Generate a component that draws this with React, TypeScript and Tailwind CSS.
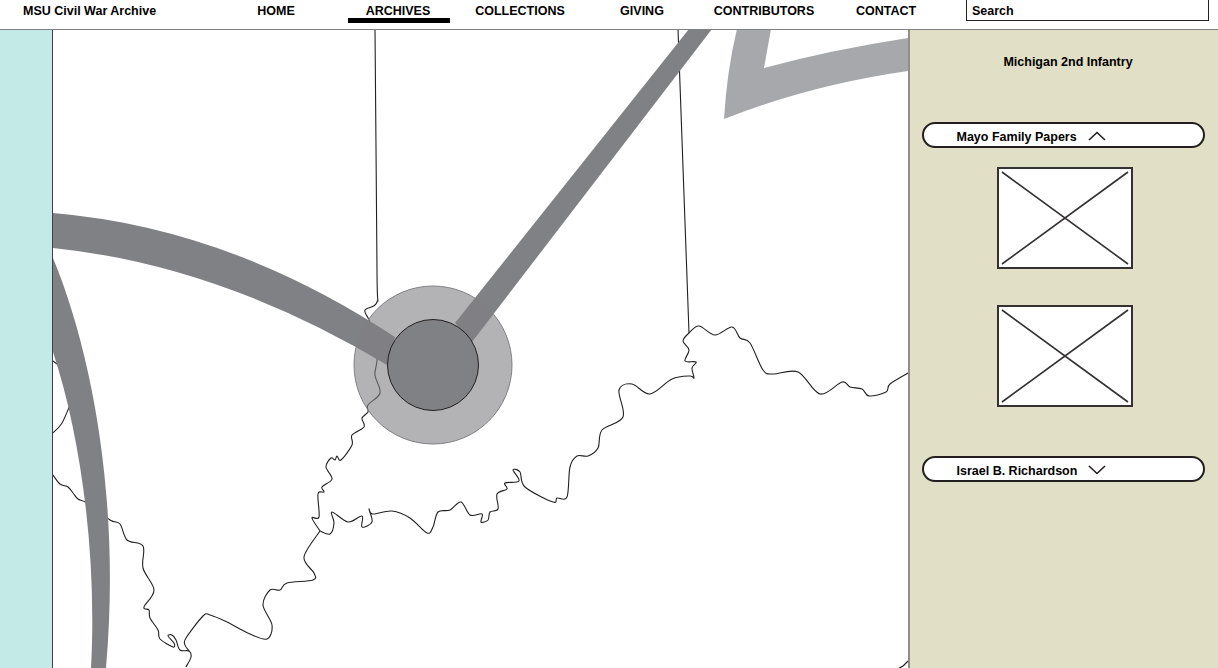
import { FC } from 'react'

const font = "font-['Liberation_Sans',Arial,sans-serif]"

type Pt = [number, number]

// smooth line through traced points (catmull-rom)
const smooth = (pts: Pt[]) => {
  let d = `M${pts[0][0]} ${pts[0][1]}`
  for (let i = 0; i < pts.length - 1; i++) {
    const p0 = pts[i - 1] || pts[i]
    const p1 = pts[i]
    const p2 = pts[i + 1]
    const p3 = pts[i + 2] || p2
    const c1x = p1[0] + (p2[0] - p0[0]) / 6
    const c1y = p1[1] + (p2[1] - p0[1]) / 6
    const c2x = p2[0] - (p3[0] - p1[0]) / 6
    const c2y = p2[1] - (p3[1] - p1[1]) / 6
    d += `C${c1x.toFixed(1)} ${c1y.toFixed(1)} ${c2x.toFixed(1)} ${c2y.toFixed(1)} ${p2[0]} ${p2[1]}`
  }
  return d
}

const rivers: Pt[][] = [
  // west border down to the bottom edge
  [[53, 475], [60, 484], [68, 487], [73, 493], [78, 499], [87, 503], [110, 520], [120, 524], [127, 540], [143, 546], [143, 568], [154, 590], [144, 607], [149, 610], [150, 618], [158, 630], [160, 639], [173, 647], [174, 643], [168, 636], [172, 635], [176, 640], [180, 650], [189, 651], [191, 657], [186, 667]],
  [[53, 433], [62, 423], [70, 405]],
  [[53, 361], [57, 364]],
  // main river, bottom edge to the junction
  [[189, 651], [185, 645], [186, 638], [203, 616], [210, 615], [227, 622], [250, 634], [267, 639], [272, 625], [263, 605], [270, 590], [280, 590], [287, 583], [313, 580], [314, 573], [304, 557], [320, 531]],
  // junction up to the north border
  [[320, 531], [312, 518], [319, 517], [318, 494], [324, 492], [322, 487], [332, 479], [326, 467], [331, 458], [335, 460], [337, 456], [341, 460], [352, 445], [352, 435], [364, 427], [362, 418], [368, 412], [368, 405], [380, 393], [375, 375], [377, 360], [375, 340], [369, 320], [365, 310], [377, 302], [377, 270], [375, 29]],
  // junction east along the bottom
  [[320, 531], [330, 534], [334, 523], [332, 512], [348, 522], [362, 516], [362, 527], [372, 522], [369, 509], [373, 514], [392, 511], [410, 518], [427, 533], [433, 527], [438, 512], [450, 510], [461, 502], [470, 515], [482, 514], [481, 522], [488, 520], [490, 512], [498, 509], [497, 494], [507, 489], [505, 483], [519, 481], [513, 470], [520, 472], [525, 487], [553, 502], [557, 498], [567, 497], [570, 467], [577, 456], [588, 456], [598, 448], [602, 430], [623, 417], [619, 390], [632, 384], [650, 394], [672, 379], [690, 376], [694, 378], [692, 368], [696, 362], [685, 361], [689, 350], [683, 341], [689, 333], [699, 326], [715, 335], [732, 327], [740, 338], [750, 343], [763, 370], [773, 374], [798, 372], [820, 394], [842, 382], [850, 387], [862, 389], [869, 396], [886, 392], [890, 384], [908, 373]],
  [[689, 333], [678, 29]],
  [[899, 668], [903, 666], [908, 661]],
]

const MapArt: FC = () => (
  <svg viewBox="53 30 855 638" className="block h-full w-full">
    {rivers.map((r, i) => (
      <path key={i} d={smooth(r)} fill="none" stroke="#231f20" strokeWidth="1.1" />
    ))}
    <path d="M737 29Q727 70 724 119Q810 85 908 71L908 38Q830 50 764 68L771 29Z" fill="#a7a8ab" />
    <path d="M53 213Q230 228 395 337L387 365Q220 265 53 248Z" fill="#808184" />
    <path d="M689 29L712 29L472 342L455 323Z" fill="#808184" />
    <path d="M53 258C95 360 120 510 106 668L91 668C97 560 82 440 53 352Z" fill="#808184" />
    <circle cx="433" cy="365" r="79" fill="#808184" fillOpacity="0.6" stroke="#808184" strokeWidth="1" />
    <circle cx="433" cy="365" r="45.5" fill="#808184" stroke="#231f20" strokeWidth="1" />
  </svg>
)

const NavItem: FC<{ label: string; active?: boolean }> = ({ label, active }) => (
  <div className="relative flex w-[122px] justify-center">
    <span>{label}</span>
    {active && <span className="absolute top-[14px] left-[11px] h-[5px] w-[102px] bg-black" />}
  </div>
)

const Pill: FC<{ label: string; open?: boolean }> = ({ label, open }) => (
  <div className="flex h-[26px] w-[283px] items-center rounded-full border-2 border-[#231f20] bg-white pl-[33px] text-[12.5px] font-bold">
    <span className="w-[131px] pt-[4px]">{label}</span>
    <svg width="18" height="10" viewBox="0 0 18 10" fill="none" stroke="#231f20" strokeWidth="1.6" className="mt-[1px]">
      <path d={open ? 'M1 9L9 1.5L17 9' : 'M1 1L9 8.5L17 1'} />
    </svg>
  </div>
)

const Placeholder: FC = () => (
  <div className="h-[102px] w-[136px] border-2 border-[#333132] bg-white">
    <svg viewBox="0 0 132 98" className="block h-full w-full" fill="none" stroke="#333132" strokeWidth="1.6">
      <path d="M3 3L129 95M129 3L3 95" />
    </svg>
  </div>
)

export default function App() {
  return (
    <div className={`flex h-screen w-full flex-col overflow-hidden bg-white text-black ${font}`}>
      <header className="flex h-[30px] shrink-0 items-start border-b border-[#808184] pt-[4px] text-[12.5px] leading-[15px] font-bold">
        <div className="w-[215px] pl-[23px]">MSU Civil War Archive</div>
        <nav className="flex">
          <NavItem label="HOME" />
          <NavItem label="ARCHIVES" active />
          <NavItem label="COLLECTIONS" />
          <NavItem label="GIVING" />
          <NavItem label="CONTRIBUTORS" />
          <NavItem label="CONTACT" />
        </nav>
        <div className="ml-[19px] -mt-[5px] flex h-[22px] w-[243px] items-center border border-[#231f20] pl-[5px]">
          <span className="pt-[2px]">Search</span>
        </div>
      </header>
      <main className="flex min-h-0 flex-1">
        <aside className="w-[53px] shrink-0 border-r border-[#414042] bg-[#c4eae8]" />
        <section className="min-w-0 flex-1">
          <MapArt />
        </section>
        <aside className="flex w-[310px] shrink-0 flex-col items-center border-l-2 border-[#8f8f85] bg-[#e1dfc5] pr-[2px]">
          <h2 className="mt-[25px] ml-[10px] text-[12.5px] leading-[15px] font-bold">Michigan 2nd Infantry</h2>
          <div className="mt-[52px]">
            <Pill label="Mayo Family Papers" open />
          </div>
          <div className="mt-[19px] ml-[4px]">
            <Placeholder />
          </div>
          <div className="mt-[36px] ml-[4px]">
            <Placeholder />
          </div>
          <div className="mt-[49px]">
            <Pill label="Israel B. Richardson" />
          </div>
        </aside>
      </main>
    </div>
  )
}
